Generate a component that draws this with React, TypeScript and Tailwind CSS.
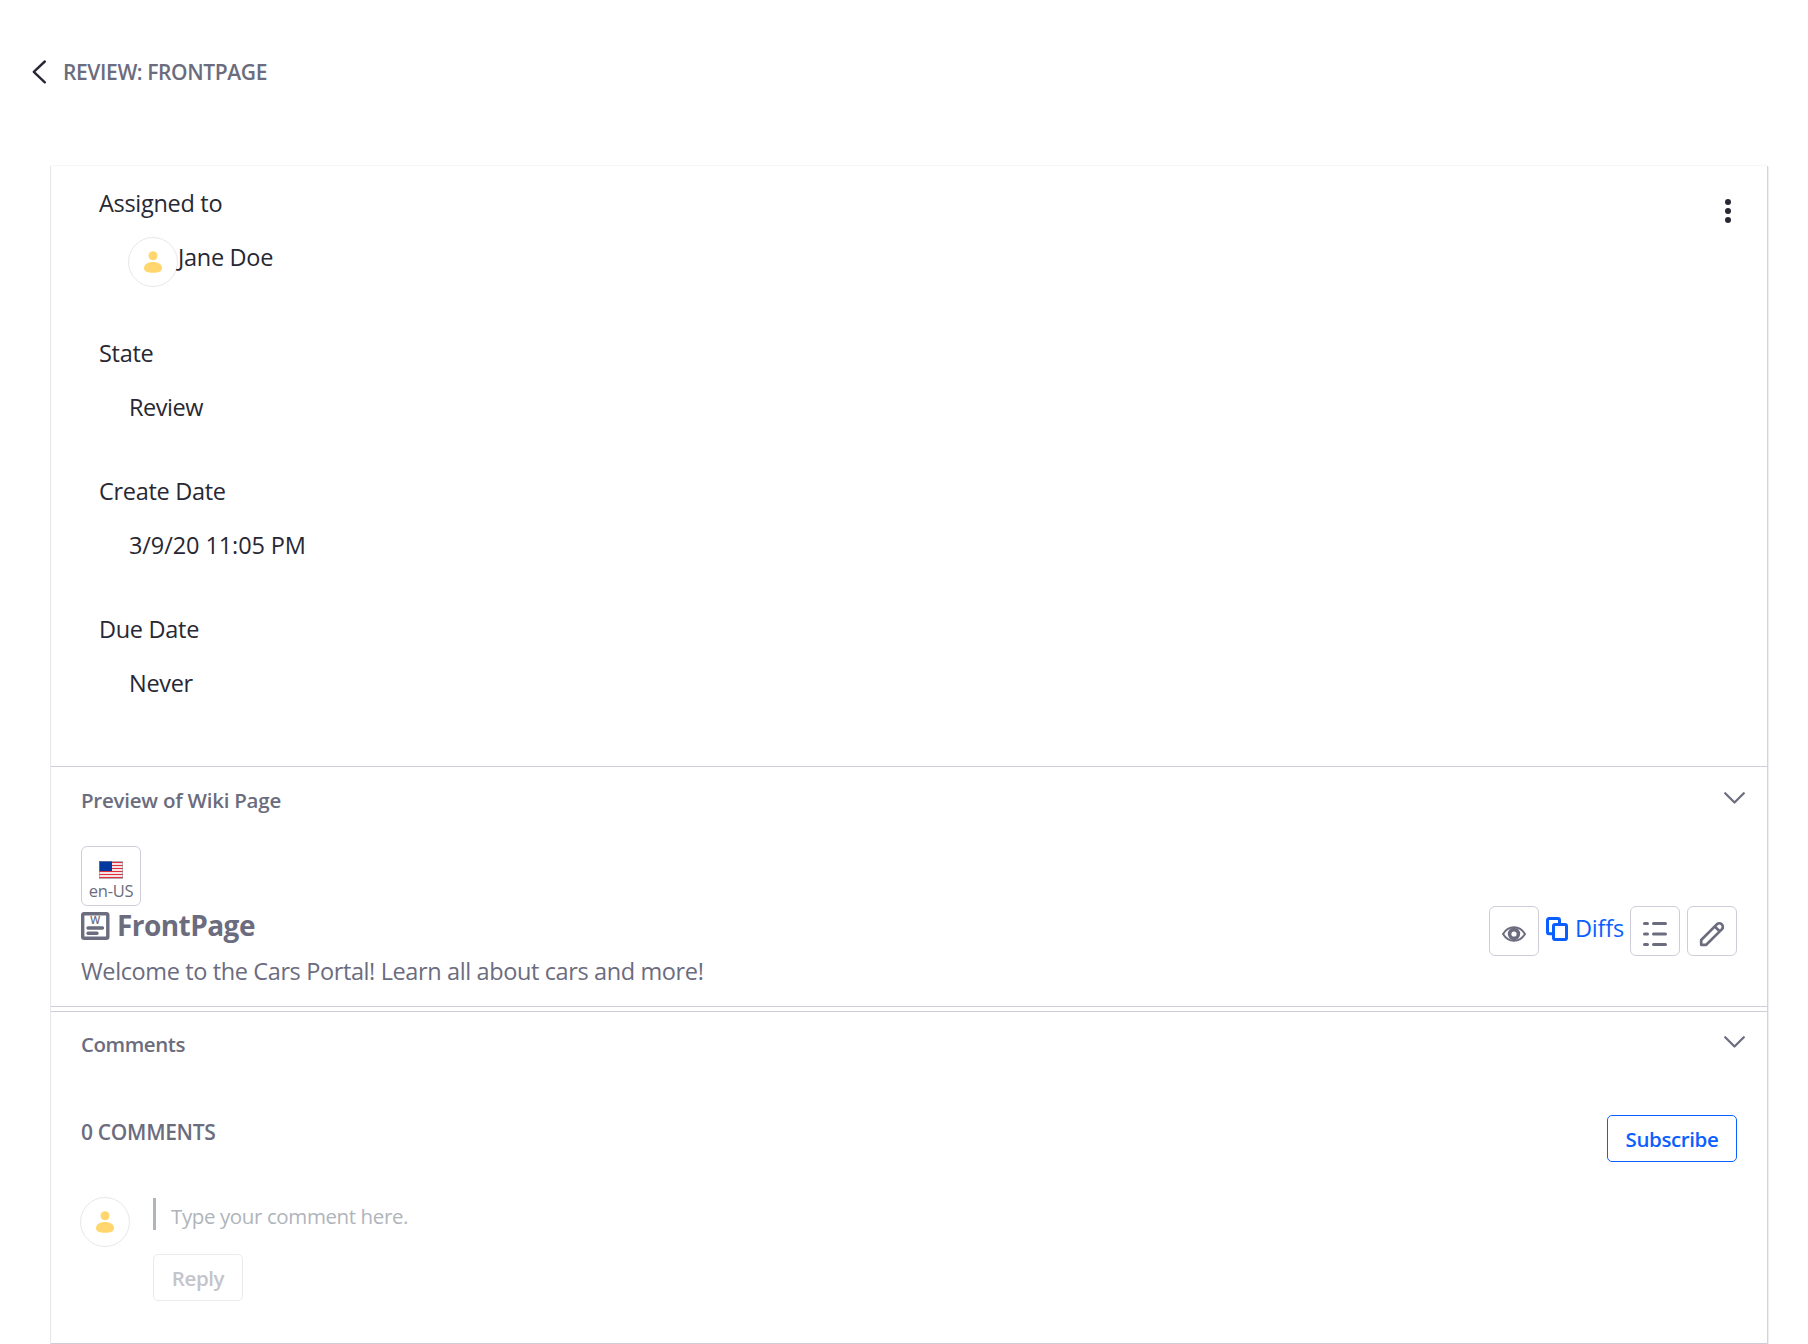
import type { ReactNode } from "react";

function UserSticker() {
  return (
    <span className="flex size-[50px] shrink-0 items-center justify-center rounded-full border border-[#e7e7ed] bg-white text-[#ffd76e]">
      <svg className="h-[22px] w-[18px]" viewBox="0 0 18 22" fill="currentColor">
        <circle cx="9" cy="4.7" r="4.5" />
        <path d="M9 11c5.500 0 9 2.400 9 6.200 0 3.200-3.500 4.600-9 4.600s-9-1.400-9-4.600C0 13.400 3.500 11 9 11z" />
      </svg>
    </span>
  );
}

function Chevron() {
  return (
    <svg className="h-3 w-[21px]" viewBox="0 0 21 12" fill="none" stroke="#6b6c7e" strokeWidth="2.2" strokeLinecap="round" strokeLinejoin="round">
      <path d="M1.200 1.200L10.500 10.500L19.800 1.200" />
    </svg>
  );
}

function Field({ label, children, className = "" }: { label: string; children: ReactNode; className?: string }) {
  return (
    <div className={className}>
      <dt className="pl-[48px]">{label}</dt>
      <dd className="mt-[18px] flex h-9 pl-[77px]">{children}</dd>
    </div>
  );
}

function PanelHeader({ title, titleClass = "" }: { title: string; titleClass?: string }) {
  return (
    <div className="flex h-[30px] justify-between pr-[22px] pl-[30px]">
      <h2 className={`pt-px text-[20.500px] leading-[30px] font-semibold text-[#6b6c7e] ${titleClass}`}>{title}</h2>
      <div className="pt-[7.500px]">
        <Chevron />
      </div>
    </div>
  );
}

function IconButton({ label, children }: { label: string; children: ReactNode }) {
  return (
    <button aria-label={label} className="size-[50px] rounded-md border border-[#cdced9] text-[#6b6c7e]">
      {children}
    </button>
  );
}

function Flag() {
  return (
    <svg className="h-[18px] w-6" viewBox="0 0 24 18" shapeRendering="crispEdges">
      <rect width="24" height="18" fill="#f4e4e6" />
      {[1, 4, 7, 10, 13, 16].map((y) => (
        <rect key={y} y={y} width="24" height="1" fill="#e02f3b" />
      ))}
      <rect width="13" height="10" fill="#0038a0" />
      <rect x="0.5" y="0.5" width="23" height="17" fill="none" stroke="#8f8a9c" strokeOpacity="0.6" />
    </svg>
  );
}

export default function App() {
  return (
    <div className="h-[1344px] overflow-hidden bg-white font-['Open_Sans','Noto_Sans',sans-serif] text-[23.500px] leading-9 text-[#272833]">
      <header className="flex h-[166px] items-start pt-[60px] pl-8">
        <svg className="h-6 w-[15px]" viewBox="0 0 15 24" fill="none" stroke="#272833" strokeWidth="2.4" strokeLinecap="round" strokeLinejoin="round">
          <path d="M12.800 1.500L1.800 11.800L12.800 22.300" />
        </svg>
        <h1 className="ml-4 text-[21px] leading-6 font-semibold tracking-[-0.390px] text-[#6b6c7e]">REVIEW: FRONTPAGE</h1>
      </header>

      <main className="ml-[51px] h-[1178px] w-[1716px] border-b border-[#cdced9] bg-white shadow-[1px_0_0_#d4d4d6,2px_1px_1px_#00000010,-1px_0_0_#e6e6e9,0_-1px_0_#f6f6f7]">
        <section className="flex h-[600px] justify-between pt-[19px] pr-[35px]">
          <dl className="tracking-[-0.300px]">
            <Field label="Assigned to">
              <span className="-mt-[2.500px]">
                <UserSticker />
              </span>
              <span>Jane Doe</span>
            </Field>
            <Field label="State" className="mt-[60px]">
              <span className="ml-px tracking-[-0.450px]">Review</span>
            </Field>
            <Field label="Create Date" className="mt-[48px]">
              <span className="ml-px tracking-[-0.100px]">3/9/20 11:05 PM</span>
            </Field>
            <Field label="Due Date" className="mt-[48px]">
              <span className="ml-px">Never</span>
            </Field>
          </dl>
          <button aria-label="Actions" className="mt-[13px] h-[26px] w-2">
            <svg className="h-[26px] w-2" viewBox="0 0 8 26" fill="#272833">
              <circle cx="4" cy="4" r="3" />
              <circle cx="4" cy="13" r="3" />
              <circle cx="4" cy="22" r="3" />
            </svg>
          </button>
        </section>

        <section className="h-[241px] border-y border-[#cdced9] pt-[17px] text-[#6b6c7e]">
          <PanelHeader title="Preview of Wiki Page" titleClass="tracking-[-0.230px]" />
          <div className="mt-8 pr-[30px] pl-[30px]">
            <button className="flex h-[60px] w-[60px] flex-col items-center rounded-md border border-[#cdced9] pt-[14px]">
              <Flag />
              <span className="mt-[2px] text-[16.500px] leading-5 tracking-[-0.300px]">en-US</span>
            </button>
            <div className="flex justify-between">
              <div>
                <div className="flex h-9">
                  <svg className="mt-[6px] h-[28px] w-[28.500px]" viewBox="0 0 28.5 28" fill="none" stroke="#6b6c7e" strokeWidth="3.400">
                    <rect x="1.700" y="1.700" width="25.100" height="24.600" rx="1.500" />
                    <path d="M7 16H21.500M7 21.300H16" strokeLinecap="round" />
                    <text x="14.200" y="12.400" textAnchor="middle" fill="#6b6c7e" stroke="none" fontSize="10.500" fontWeight="600">
                      W
                    </text>
                  </svg>
                  <h3 className="ml-[7.500px] pt-px text-[28px] font-bold tracking-[-0.550px]">FrontPage</h3>
                </div>
                <p className="mt-[11px] tracking-[-0.380px]">Welcome to the Cars Portal! Learn all about cars and more!</p>
              </div>
              <div className="flex h-[50px]">
                <IconButton label="View">
                  <svg className="size-[48px]" viewBox="1 1 48 48" fill="none" stroke="currentColor">
                    <path d="M14 28C19.500 19 30.500 19 36 28C30.500 37 19.500 37 14 28Z" strokeWidth="2" strokeLinejoin="round" />
                    <circle cx="25" cy="28" r="4.400" strokeWidth="3.600" />
                  </svg>
                </IconButton>
                <a className="flex h-9 pt-1 text-[#0b5fff]">
                  <svg className="mt-[7px] ml-[7px] h-6 w-[22px]" viewBox="0 0 22 24" fill="none" stroke="currentColor" strokeWidth="3">
                    <path d="M7 16.700H3a1.500 1.500 0 0 1-1.500-1.500V3A1.500 1.500 0 0 1 3 1.500H12A1.500 1.500 0 0 1 13.500 3V6.500" />
                    <rect x="7.500" y="7.500" width="13" height="15" rx="1.500" />
                  </svg>
                  <span className="ml-[7px] tracking-[-0.200px]">Diffs</span>
                </a>
                <div className="flex gap-[7px] pl-[6px]">
                  <IconButton label="History">
                    <svg className="size-[48px]" viewBox="1 1 48 48" fill="none" stroke="currentColor" strokeWidth="3" strokeLinecap="round">
                      <path d="M14.500 17.500H17.500M23.500 17.500H35.500M14.500 28H17.500M23.500 28H35.500M14.500 38.500H17.500M23.500 38.500H35.500" />
                    </svg>
                  </IconButton>
                  <IconButton label="Edit">
                    <svg className="size-[48px]" viewBox="1 1 48 48" fill="none" stroke="currentColor" strokeWidth="2.700" strokeLinejoin="round">
                      <path d="M14.200 38.800V34L29.800 18.400a3.500 3.500 0 0 1 5 5L19.200 38.800Z" />
                      <path d="M27.800 20.500L32.600 25.300" />
                    </svg>
                  </IconButton>
                </div>
              </div>
            </div>
          </div>
        </section>

        <section className="mt-1 h-[332px] border-t border-[#cdced9] pt-4 text-[#6b6c7e]">
          <PanelHeader title="Comments" titleClass="tracking-[-0.450px]" />
          <div className="mt-[57px] flex justify-between px-[30px] font-semibold">
            <p className="pt-[2px] text-[21px] leading-[30px] tracking-[-0.300px]">0 COMMENTS</p>
            <button className="h-[47px] w-[130px] rounded-[5px] border border-[#0b5fff] pt-px text-[20.500px] leading-[45px] tracking-[-0.400px] text-[#0b5fff]">
              Subscribe
            </button>
          </div>
          <div className="mt-[35px] flex pl-[29px]">
            <UserSticker />
            <div className="ml-[23px]">
              <div className="mt-px h-8 border-l-[3px] border-[#b0b4bb] pt-[3px] pl-[15px] text-[20.500px] leading-[30px] tracking-[-0.390px] text-[#b0b4bb]">
                Type your comment here.
              </div>
              <button className="mt-6 block h-[47px] w-[90px] rounded-[5px] border border-[#ebebef] pt-px text-[20.500px] leading-[45px] font-semibold tracking-[-0.400px] text-[#c4c4cb]">
                Reply
              </button>
            </div>
          </div>
        </section>
      </main>
    </div>
  );
}
